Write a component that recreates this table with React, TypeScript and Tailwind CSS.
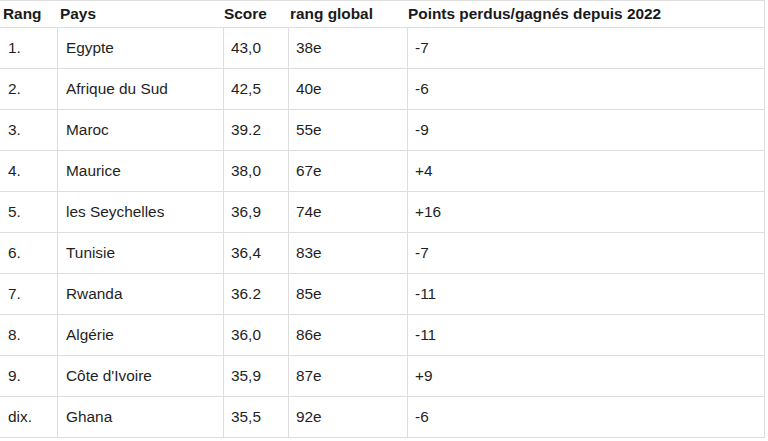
const rows = [
  { rang: '1.', pays: 'Egypte', score: '43,0', global: '38e', delta: '-7' },
  { rang: '2.', pays: 'Afrique du Sud', score: '42,5', global: '40e', delta: '-6' },
  { rang: '3.', pays: 'Maroc', score: '39.2', global: '55e', delta: '-9' },
  { rang: '4.', pays: 'Maurice', score: '38,0', global: '67e', delta: '+4' },
  { rang: '5.', pays: 'les Seychelles', score: '36,9', global: '74e', delta: '+16' },
  { rang: '6.', pays: 'Tunisie', score: '36,4', global: '83e', delta: '-7' },
  { rang: '7.', pays: 'Rwanda', score: '36.2', global: '85e', delta: '-11' },
  { rang: '8.', pays: 'Algérie', score: '36,0', global: '86e', delta: '-11' },
  { rang: '9.', pays: "Côte d'Ivoire", score: '35,9', global: '87e', delta: '+9' },
  { rang: 'dix.', pays: 'Ghana', score: '35,5', global: '92e', delta: '-6' },
];

const cols = 'grid grid-cols-[57px_166px_65px_119px_1fr]';

export default function App() {
  return (
    <div className="min-h-[441px] bg-white font-['Liberation_Sans',Arial,sans-serif] text-[15.4px] text-[#1f1f1f]">
      <div className="w-[765px] border-t border-r border-[#dedede]">
        <div className={`${cols} h-[27px] items-center border-b border-[#dedede] font-bold text-[#1a1a1a]`}>
          <div className="pl-[3px]">Rang</div>
          <div className="pl-[3px]">Pays</div>
          <div className="pl-px">Score</div>
          <div className="pl-[2px]">rang global</div>
          <div className="pl-px">Points perdus/gagnés depuis 2022</div>
        </div>
        {rows.map((r) => (
          <div key={r.pays} className={`${cols} h-[41px] border-b border-[#dedede]`}>
            <div className="flex items-center pl-2">{r.rang}</div>
            <div className="flex items-center border-l border-[#dedede] pl-2">{r.pays}</div>
            <div className="flex items-center border-l border-[#dedede] pl-[7px]">{r.score}</div>
            <div className="flex items-center border-l border-[#dedede] pl-[7px]">{r.global}</div>
            <div className="flex items-center border-l border-[#dedede] pl-[7px]">{r.delta}</div>
          </div>
        ))}
      </div>
    </div>
  );
}
